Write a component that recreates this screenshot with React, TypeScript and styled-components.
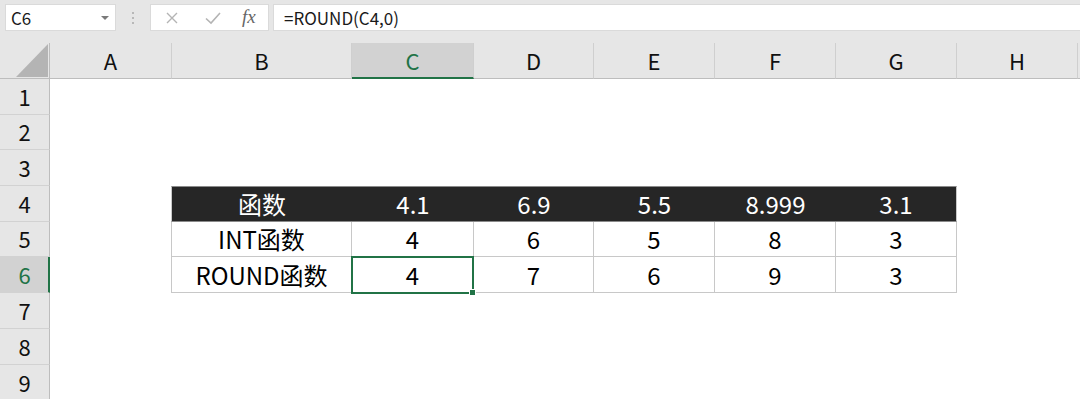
import React from 'react';
import styled, { createGlobalStyle, css } from 'styled-components';

const GREEN = '#217346';
const HEADER_BG = '#e6e6e6';
const HEADER_SELECTED = '#d2d2d2';
const FONT = `"Noto Sans CJK SC", "Noto Sans", sans-serif`;

const GlobalStyle = createGlobalStyle`
  html, body {
    margin: 0;
    padding: 0;
    background: #ffffff;
    overflow: hidden;
  }
  body {
    font-family: ${FONT};
    color: #000;
  }
`;

const COLUMNS = [
  { key: 'A', width: 122 },
  { key: 'B', width: 180 },
  { key: 'C', width: 122 },
  { key: 'D', width: 120 },
  { key: 'E', width: 121 },
  { key: 'F', width: 121 },
  { key: 'G', width: 121 },
  { key: 'H', width: 121 },
];
const ROW_HEIGHTS = [36, 35, 36, 36, 35, 36, 36, 36, 36];

// table body, keyed by row number, starting at column B
const TABLE: Record<number, string[]> = {
  4: ['函数', '4.1', '6.9', '5.5', '8.999', '3.1'],
  5: ['INT函数', '4', '6', '5', '8', '3'],
  6: ['ROUND函数', '4', '7', '6', '9', '3'],
};
const TABLE_COLS = ['B', 'C', 'D', 'E', 'F', 'G'];
const ACTIVE = { col: 'C', row: 6 };

export default function App() {
  return (
    <Page>
      <GlobalStyle />
      <Toolbar>
        <NameBox>
          <NameText>C6</NameText>
          <DropArrow />
        </NameBox>
        <Grip>
          <i />
          <i />
          <i />
        </Grip>
        <FxButtons>
          <svg width="14" height="14" viewBox="0 0 14 14">
            <path d="M2 2 L12 12 M12 2 L2 12" stroke="#b4b4b4" strokeWidth="1.4" fill="none" />
          </svg>
          <svg width="18" height="14" viewBox="0 0 18 14">
            <path d="M2 7.5 L7 12 L16 2" stroke="#b4b4b4" strokeWidth="1.6" fill="none" />
          </svg>
          <FxLabel>fx</FxLabel>
        </FxButtons>
        <FormulaInput>=ROUND(C4,0)</FormulaInput>
      </Toolbar>

      <Sheet>
        <Corner>
          <CornerTriangle />
        </Corner>
        {COLUMNS.map((c) => (
          <ColHeader key={c.key} $selected={c.key === ACTIVE.col}>
            {c.key}
          </ColHeader>
        ))}
        <ColHeaderFill />

        {ROW_HEIGHTS.map((_, i) => {
          let row = i + 1;
          let values = TABLE[row];
          return (
            <React.Fragment key={row}>
              <RowHeader $selected={row === ACTIVE.row}>{row}</RowHeader>
              {COLUMNS.map((c) => {
                let idx = TABLE_COLS.indexOf(c.key);
                if (!values || idx < 0) return <Cell key={c.key} />;
                let isHead = row === 4;
                return (
                  <TableCell
                    key={c.key}
                    $head={isHead}
                    $first={idx === 0}
                    $last={idx === TABLE_COLS.length - 1}
                    $active={c.key === ACTIVE.col && row === ACTIVE.row}
                  >
                    {values[idx]}
                  </TableCell>
                );
              })}
              <Cell />
            </React.Fragment>
          );
        })}
      </Sheet>
    </Page>
  );
}

const Page = styled.div`
  width: 1080px;
  height: 399px;
  overflow: hidden;
  background: #fff;
`;

const Toolbar = styled.div`
  height: 43px;
  box-sizing: border-box;
  padding: 4px 0 0 5px;
  display: flex;
  align-items: flex-start;
  background: ${HEADER_BG};
`;

const NameBox = styled.div`
  width: 111px;
  height: 27px;
  box-sizing: border-box;
  background: #fff;
  border: 1px solid #dadada;
  display: flex;
  align-items: center;
  justify-content: space-between;
  padding: 0 5px 0 5px;
`;

const NameText = styled.span`
  font-size: 17px;
  line-height: 1;
  color: #1a1a1a;
`;

const DropArrow = styled.span`
  width: 0;
  height: 0;
  border-left: 4px solid transparent;
  border-right: 4px solid transparent;
  border-top: 4px solid #7a7a7a;
  margin-right: 1px;
`;

const Grip = styled.div`
  width: 34px;
  height: 27px;
  display: flex;
  flex-direction: column;
  align-items: center;
  justify-content: center;
  gap: 3px;
  i {
    display: block;
    width: 2px;
    height: 2px;
    background: #b8b8b8;
  }
`;

const FxButtons = styled.div`
  width: 119px;
  height: 27px;
  box-sizing: border-box;
  background: #fff;
  border: 1px solid #dadada;
  display: flex;
  align-items: center;
  padding: 0 8px 0 14px;
  svg:first-child {
    margin-right: 25px;
  }
  svg:nth-child(2) {
    margin-right: 20px;
  }
`;

const FxLabel = styled.span`
  font-family: "Liberation Serif", "DejaVu Serif", serif;
  font-style: italic;
  font-size: 19px;
  color: #666;
  line-height: 1;
  margin-top: -2px;
`;

const FormulaInput = styled.div`
  flex: 1;
  height: 27px;
  margin-left: 4px;
  box-sizing: border-box;
  background: #fff;
  border: 1px solid #dadada;
  border-right: none;
  padding-left: 10px;
  display: flex;
  align-items: center;
  font-size: 17px;
  color: #1a1a1a;
`;

const Sheet = styled.div`
  display: grid;
  grid-template-columns: 50px ${COLUMNS.map((c) => `${c.width}px`).join(' ')} 1fr;
  grid-template-rows: 36px ${ROW_HEIGHTS.map((h) => `${h}px`).join(' ')};
`;

const Corner = styled.div`
  background: ${HEADER_BG};
  box-sizing: border-box;
  border-right: 1px solid #bdbdbd;
  border-bottom: 1px solid #bdbdbd;
  display: flex;
  align-items: flex-end;
  justify-content: flex-end;
  padding: 0 1px 1px 0;
`;

const CornerTriangle = styled.div`
  width: 32px;
  height: 33px;
  background: #b4b4b4;
  clip-path: polygon(100% 0, 100% 100%, 0 100%);
`;

const headerText = css`
  font-size: 22px;
  line-height: 1;
  display: flex;
  align-items: center;
  justify-content: center;
  box-sizing: border-box;
  padding-bottom: 2px;
`;

const ColHeader = styled.div<{ $selected?: boolean }>`
  ${headerText}
  background: ${(p) => (p.$selected ? HEADER_SELECTED : HEADER_BG)};
  color: ${(p) => (p.$selected ? GREEN : '#111')};
  border-right: 1px solid #cfcfcf;
  border-bottom: ${(p) => (p.$selected ? `2px solid ${GREEN}` : '1px solid #bdbdbd')};
  padding-bottom: ${(p) => (p.$selected ? '1px' : '2px')};
`;

const ColHeaderFill = styled.div`
  background: ${HEADER_BG};
  border-bottom: 1px solid #bdbdbd;
`;

const RowHeader = styled.div<{ $selected?: boolean }>`
  ${headerText}
  background: ${(p) => (p.$selected ? HEADER_SELECTED : HEADER_BG)};
  color: ${(p) => (p.$selected ? GREEN : '#111')};
  border-bottom: 1px solid #d2d2d2;
  border-right: ${(p) => (p.$selected ? `2px solid ${GREEN}` : '1px solid #bdbdbd')};
  padding-left: ${(p) => (p.$selected ? '1px' : '0')};
`;

const Cell = styled.div`
  background: #fff;
`;

type TableCellProps = {
  $head: boolean;
  $first: boolean;
  $last: boolean;
  $active: boolean;
};

const TableCell = styled.div<TableCellProps>`
  position: relative;
  box-sizing: border-box;
  display: flex;
  align-items: center;
  justify-content: center;
  font-size: 24px;
  line-height: 1;
  background: ${(p) => (p.$head ? '#262626' : '#fff')};
  color: ${(p) => (p.$head ? '#fff' : '#000')};
  border-bottom: 1px solid ${(p) => (p.$head ? '#8a8a8a' : '#c8c8c8')};
  border-top: ${(p) => (p.$head ? '1px solid #8a8a8a' : 'none')};
  border-right: ${(p) => (p.$head && !p.$last ? 'none' : '1px solid #c8c8c8')};
  border-left: ${(p) => (p.$first ? '1px solid #c8c8c8' : 'none')};
  margin-left: ${(p) => (p.$first ? '-1px' : '0')};
  ${(p) =>
    p.$active &&
    css`
      &::after {
        content: '';
        position: absolute;
        left: -1px;
        top: -1px;
        right: -1px;
        bottom: -2px;
        border: 2px solid ${GREEN};
      }
      &::before {
        content: '';
        position: absolute;
        right: -3px;
        bottom: -4px;
        width: 5px;
        height: 5px;
        background: ${GREEN};
        border: 1px solid #fff;
        z-index: 1;
      }
    `}
`;
